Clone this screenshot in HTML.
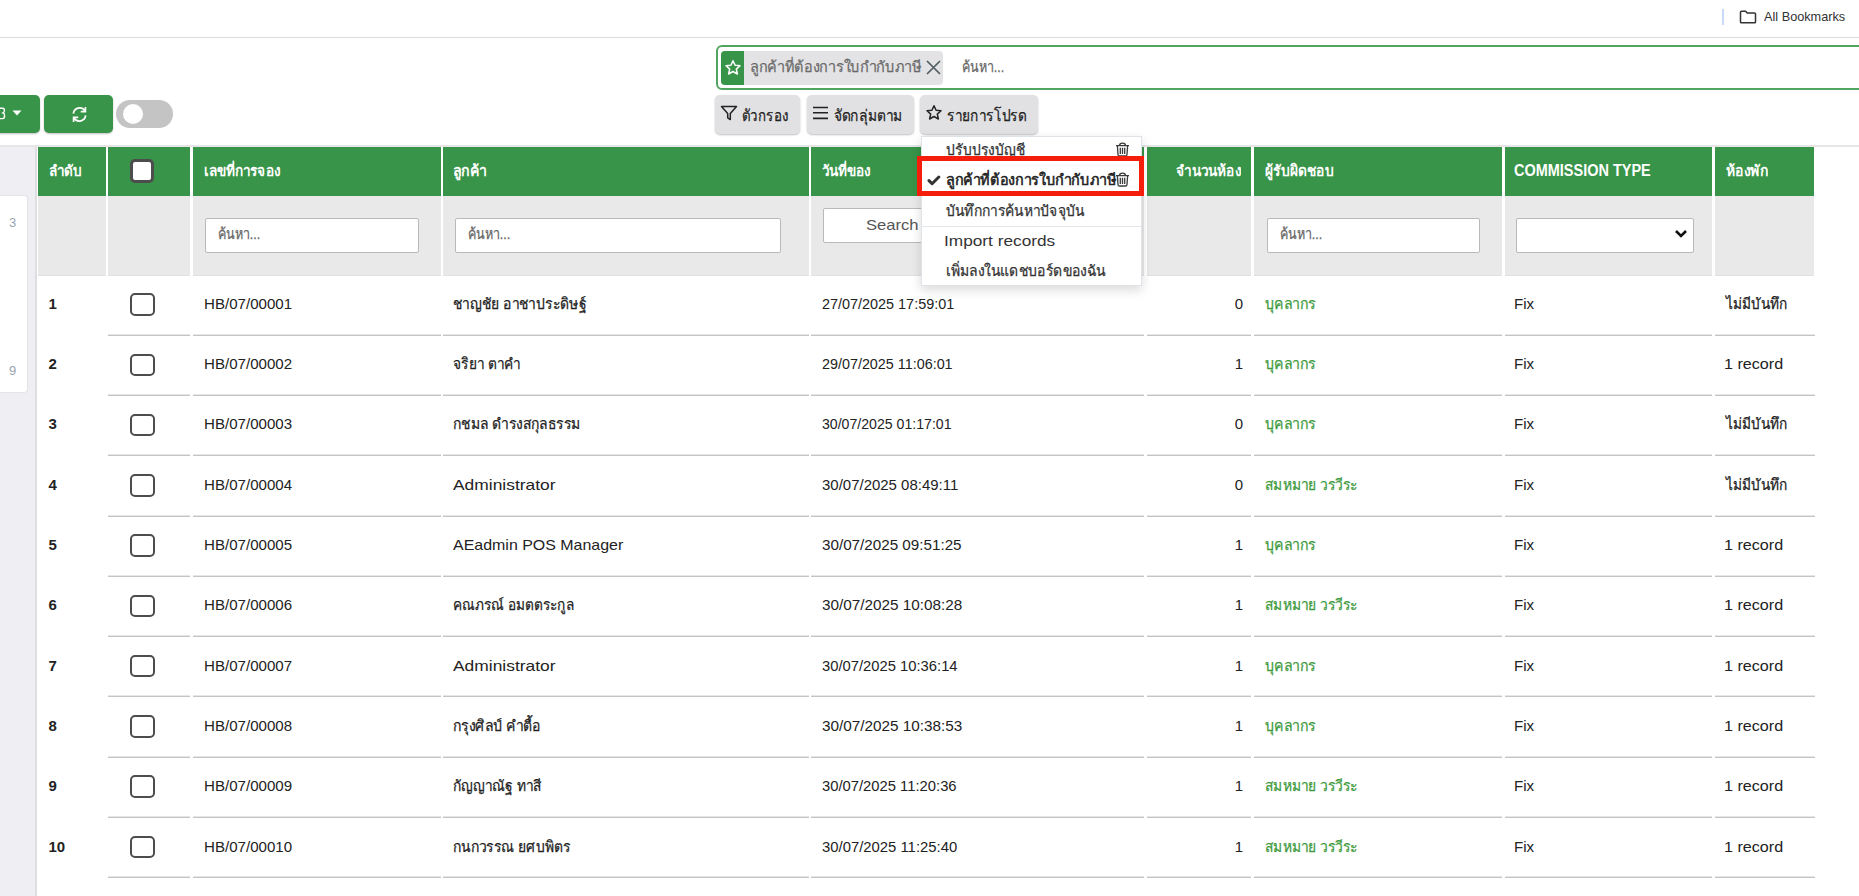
<!DOCTYPE html>
<html><head><meta charset="utf-8">
<style>
*{box-sizing:border-box;margin:0;padding:0}
html,body{width:1859px;height:896px;overflow:hidden;background:#fff;font-family:"Liberation Sans",sans-serif;color:#222}
.a{position:absolute}
.nw{white-space:nowrap;overflow:hidden}
#topline{left:0;top:37px;width:1859px;height:1px;background:#dadedb}
#hline{left:0;top:145px;width:1859px;height:2px;background:#e6e6e8}
#search{left:716px;top:45px;width:1200px;height:45px;border:2px solid #52a561;border-radius:6px}
#chip{left:721px;top:51px;width:222px;height:34px;background:#e3e3e5;border-radius:4px}
#chipicon{left:721px;top:51px;width:23px;height:34px;background:#389448;border-radius:4px 0 0 4px}
.gbtn{height:39px;top:95px;background:#e1e1e3;border-radius:5px;box-shadow:0 1px 2px rgba(0,0,0,.25);font-size:16px;color:#222;line-height:39px;white-space:nowrap;overflow:hidden}
.grn{background:#389448;border-radius:5px;box-shadow:0 1px 2px rgba(0,0,0,.25)}
#panel{left:0;top:147px;width:37px;height:749px;background:#efeff3;border-right:2px solid #dedee2}
#card{left:0;top:196px;width:27px;height:196px;background:#fff;border-radius:0 3px 3px 0;box-shadow:0 0 2px rgba(0,0,0,.15)}
#hdr{left:38px;top:147px;width:1776px;height:49px;background:#389448}
#flt{left:38px;top:196px;width:1776px;height:80px;background:#e9e9e9;border-bottom:1px solid #dde1e6}
.sep{top:147px;height:749px;background:#fff}
.hd{top:147px;height:49px;line-height:49px;color:#fff;font-weight:bold;font-size:15px;white-space:nowrap;overflow:hidden}
.inp{height:35px;background:#fff;border:1px solid #b9b9b9;border-radius:2px;font-size:15px;color:#666;line-height:33px;padding-left:12px;white-space:nowrap;overflow:hidden}
.rl{height:2px;border-top:1px solid #e6e6e6;background:#c4c4c4}
.t{white-space:nowrap;transform-origin:left center;-webkit-text-stroke:0.25px currentColor}
.chk{width:24.5px;height:22.5px;border:2.6px solid #4d4d4d;border-radius:5px;background:#fff}
.gt{color:#3a9a3a}
.dd{left:921px;top:136px;width:221px;height:150px;background:#fff;border:1px solid #dfe2e7;box-shadow:0 4px 10px rgba(0,0,0,.15)}
.di{font-size:15px;color:#333;white-space:nowrap;height:20px;line-height:20px;left:945px}

</style></head><body>
<div class="a" id="panel"></div><div class="a" id="card"></div><div class="a t" style="top:213.00px;font-size:13px;line-height:20px;left:9.00px;-webkit-text-stroke:0;color:#9aa5b1;">3</div><div class="a t" style="top:360.50px;font-size:13px;line-height:20px;left:9.00px;-webkit-text-stroke:0;color:#9aa5b1;">9</div><div class="a" id="hdr"></div><div class="a" id="flt"></div><div class="a rl" style="left:107.5px;top:333.75px;width:82.5px"></div><div class="a rl" style="left:192.5px;top:333.75px;width:248.5px"></div><div class="a rl" style="left:442.5px;top:333.75px;width:366.5px"></div><div class="a rl" style="left:810.5px;top:333.75px;width:333.5px"></div><div class="a rl" style="left:1146.5px;top:333.75px;width:104.5px"></div><div class="a rl" style="left:1253.5px;top:333.75px;width:248.5px"></div><div class="a rl" style="left:1504.5px;top:333.75px;width:207.5px"></div><div class="a rl" style="left:1714.5px;top:333.75px;width:100.5px"></div><div class="a rl" style="left:107.5px;top:394.00px;width:82.5px"></div><div class="a rl" style="left:192.5px;top:394.00px;width:248.5px"></div><div class="a rl" style="left:442.5px;top:394.00px;width:366.5px"></div><div class="a rl" style="left:810.5px;top:394.00px;width:333.5px"></div><div class="a rl" style="left:1146.5px;top:394.00px;width:104.5px"></div><div class="a rl" style="left:1253.5px;top:394.00px;width:248.5px"></div><div class="a rl" style="left:1504.5px;top:394.00px;width:207.5px"></div><div class="a rl" style="left:1714.5px;top:394.00px;width:100.5px"></div><div class="a rl" style="left:107.5px;top:454.25px;width:82.5px"></div><div class="a rl" style="left:192.5px;top:454.25px;width:248.5px"></div><div class="a rl" style="left:442.5px;top:454.25px;width:366.5px"></div><div class="a rl" style="left:810.5px;top:454.25px;width:333.5px"></div><div class="a rl" style="left:1146.5px;top:454.25px;width:104.5px"></div><div class="a rl" style="left:1253.5px;top:454.25px;width:248.5px"></div><div class="a rl" style="left:1504.5px;top:454.25px;width:207.5px"></div><div class="a rl" style="left:1714.5px;top:454.25px;width:100.5px"></div><div class="a rl" style="left:107.5px;top:514.50px;width:82.5px"></div><div class="a rl" style="left:192.5px;top:514.50px;width:248.5px"></div><div class="a rl" style="left:442.5px;top:514.50px;width:366.5px"></div><div class="a rl" style="left:810.5px;top:514.50px;width:333.5px"></div><div class="a rl" style="left:1146.5px;top:514.50px;width:104.5px"></div><div class="a rl" style="left:1253.5px;top:514.50px;width:248.5px"></div><div class="a rl" style="left:1504.5px;top:514.50px;width:207.5px"></div><div class="a rl" style="left:1714.5px;top:514.50px;width:100.5px"></div><div class="a rl" style="left:107.5px;top:574.75px;width:82.5px"></div><div class="a rl" style="left:192.5px;top:574.75px;width:248.5px"></div><div class="a rl" style="left:442.5px;top:574.75px;width:366.5px"></div><div class="a rl" style="left:810.5px;top:574.75px;width:333.5px"></div><div class="a rl" style="left:1146.5px;top:574.75px;width:104.5px"></div><div class="a rl" style="left:1253.5px;top:574.75px;width:248.5px"></div><div class="a rl" style="left:1504.5px;top:574.75px;width:207.5px"></div><div class="a rl" style="left:1714.5px;top:574.75px;width:100.5px"></div><div class="a rl" style="left:107.5px;top:635.00px;width:82.5px"></div><div class="a rl" style="left:192.5px;top:635.00px;width:248.5px"></div><div class="a rl" style="left:442.5px;top:635.00px;width:366.5px"></div><div class="a rl" style="left:810.5px;top:635.00px;width:333.5px"></div><div class="a rl" style="left:1146.5px;top:635.00px;width:104.5px"></div><div class="a rl" style="left:1253.5px;top:635.00px;width:248.5px"></div><div class="a rl" style="left:1504.5px;top:635.00px;width:207.5px"></div><div class="a rl" style="left:1714.5px;top:635.00px;width:100.5px"></div><div class="a rl" style="left:107.5px;top:695.25px;width:82.5px"></div><div class="a rl" style="left:192.5px;top:695.25px;width:248.5px"></div><div class="a rl" style="left:442.5px;top:695.25px;width:366.5px"></div><div class="a rl" style="left:810.5px;top:695.25px;width:333.5px"></div><div class="a rl" style="left:1146.5px;top:695.25px;width:104.5px"></div><div class="a rl" style="left:1253.5px;top:695.25px;width:248.5px"></div><div class="a rl" style="left:1504.5px;top:695.25px;width:207.5px"></div><div class="a rl" style="left:1714.5px;top:695.25px;width:100.5px"></div><div class="a rl" style="left:107.5px;top:755.50px;width:82.5px"></div><div class="a rl" style="left:192.5px;top:755.50px;width:248.5px"></div><div class="a rl" style="left:442.5px;top:755.50px;width:366.5px"></div><div class="a rl" style="left:810.5px;top:755.50px;width:333.5px"></div><div class="a rl" style="left:1146.5px;top:755.50px;width:104.5px"></div><div class="a rl" style="left:1253.5px;top:755.50px;width:248.5px"></div><div class="a rl" style="left:1504.5px;top:755.50px;width:207.5px"></div><div class="a rl" style="left:1714.5px;top:755.50px;width:100.5px"></div><div class="a rl" style="left:107.5px;top:815.75px;width:82.5px"></div><div class="a rl" style="left:192.5px;top:815.75px;width:248.5px"></div><div class="a rl" style="left:442.5px;top:815.75px;width:366.5px"></div><div class="a rl" style="left:810.5px;top:815.75px;width:333.5px"></div><div class="a rl" style="left:1146.5px;top:815.75px;width:104.5px"></div><div class="a rl" style="left:1253.5px;top:815.75px;width:248.5px"></div><div class="a rl" style="left:1504.5px;top:815.75px;width:207.5px"></div><div class="a rl" style="left:1714.5px;top:815.75px;width:100.5px"></div><div class="a rl" style="left:107.5px;top:876.00px;width:82.5px"></div><div class="a rl" style="left:192.5px;top:876.00px;width:248.5px"></div><div class="a rl" style="left:442.5px;top:876.00px;width:366.5px"></div><div class="a rl" style="left:810.5px;top:876.00px;width:333.5px"></div><div class="a rl" style="left:1146.5px;top:876.00px;width:104.5px"></div><div class="a rl" style="left:1253.5px;top:876.00px;width:248.5px"></div><div class="a rl" style="left:1504.5px;top:876.00px;width:207.5px"></div><div class="a rl" style="left:1714.5px;top:876.00px;width:100.5px"></div><div class="a rl" style="left:107.5px;top:936.25px;width:82.5px"></div><div class="a rl" style="left:192.5px;top:936.25px;width:248.5px"></div><div class="a rl" style="left:442.5px;top:936.25px;width:366.5px"></div><div class="a rl" style="left:810.5px;top:936.25px;width:333.5px"></div><div class="a rl" style="left:1146.5px;top:936.25px;width:104.5px"></div><div class="a rl" style="left:1253.5px;top:936.25px;width:248.5px"></div><div class="a rl" style="left:1504.5px;top:936.25px;width:207.5px"></div><div class="a rl" style="left:1714.5px;top:936.25px;width:100.5px"></div><div class="a sep" style="left:106px;width:2px"></div><div class="a sep" style="left:190px;width:3px"></div><div class="a sep" style="left:441px;width:2px"></div><div class="a sep" style="left:809px;width:2px"></div><div class="a sep" style="left:1144px;width:3px"></div><div class="a sep" style="left:1251px;width:3px"></div><div class="a sep" style="left:1502px;width:3px"></div><div class="a sep" style="left:1712px;width:3px"></div><div class="a t" style="top:160.50px;font-size:15px;line-height:20px;left:48.50px;font-weight:bold;-webkit-text-stroke:0;color:#fff;">ลำดับ</div><div class="a t" style="top:160.50px;font-size:15px;line-height:20px;left:204.00px;font-weight:bold;-webkit-text-stroke:0;color:#fff;">เลขที่การจอง</div><div class="a t" style="top:160.50px;font-size:15px;line-height:20px;left:453.00px;font-weight:bold;-webkit-text-stroke:0;color:#fff;">ลูกค้า</div><div class="a t" style="top:160.50px;font-size:15px;line-height:20px;left:822.00px;font-weight:bold;-webkit-text-stroke:0;color:#fff;">วันที่ของ</div><div class="a t" style="top:160.50px;font-size:15px;line-height:20px;right:618.00px;transform-origin:right center;font-weight:bold;-webkit-text-stroke:0;color:#fff;">จำนวนห้อง</div><div class="a t" style="top:160.50px;font-size:15px;line-height:20px;left:1265.00px;font-weight:bold;-webkit-text-stroke:0;color:#fff;">ผู้รับผิดชอบ</div><div class="a t" style="top:160.00px;font-size:16px;line-height:22px;left:1514.00px;font-weight:bold;-webkit-text-stroke:0;color:#fff;">COMMISSION TYPE</div><div class="a t" style="top:160.50px;font-size:15px;line-height:20px;left:1725.50px;font-weight:bold;-webkit-text-stroke:0;color:#fff;">ห้องพัก</div><div class="a chk" style="left:130px;top:159px;width:24px;height:24px;border-width:3px"></div><div class="a inp" style="left:205px;top:217.5px;width:214px"></div><div class="a inp" style="left:455px;top:217.5px;width:326px"></div><div class="a inp" style="left:823px;top:207.5px;width:307px"></div><div class="a inp" style="left:1267px;top:217.5px;width:213px"></div><div class="a inp" style="left:1516px;top:217.5px;width:178px"></div><div class="a t" style="top:224.00px;font-size:15px;line-height:20px;left:218.00px;color:#666;">ค้นหา...</div><div class="a t" style="top:224.00px;font-size:15px;line-height:20px;left:468.00px;color:#666;">ค้นหา...</div><div class="a t" style="top:214.50px;font-size:15px;line-height:20px;left:866.00px;-webkit-text-stroke:0;color:#555;">Search</div><div class="a t" style="top:224.00px;font-size:15px;line-height:20px;left:1280.00px;color:#666;">ค้นหา...</div><svg class="a" style="left:1674px;top:229px" width="14" height="10" viewBox="0 0 14 10"><path d="M2 2 L7 7 L12 2" fill="none" stroke="#111" stroke-width="2.6"/></svg><div class="a t" style="top:293.62px;font-size:15px;line-height:20px;left:48.50px;font-weight:bold;-webkit-text-stroke:0;">1</div><div class="a chk" style="left:130px;top:293.30px"></div><div class="a t" style="top:293.62px;font-size:15px;line-height:20px;left:204.00px;-webkit-text-stroke:0;">HB/07/00001</div><div class="a t" style="top:293.62px;font-size:15px;line-height:20px;left:453.00px;">ชาญชัย อาชาประดิษฐ์</div><div class="a t" style="top:293.62px;font-size:15px;line-height:20px;left:822.00px;-webkit-text-stroke:0;">27/07/2025 17:59:01</div><div class="a t" style="top:293.62px;font-size:15px;line-height:20px;right:616.00px;transform-origin:right center;-webkit-text-stroke:0;">0</div><div class="a t" style="top:293.62px;font-size:15px;line-height:20px;left:1265.00px;color:#3d9a3d;">บุคลากร</div><div class="a t" style="top:293.62px;font-size:15px;line-height:20px;left:1514.00px;-webkit-text-stroke:0;">Fix</div><div class="a t" style="top:293.62px;font-size:15px;line-height:20px;left:1725.50px;">ไม่มีบันทึก</div><div class="a t" style="top:353.95px;font-size:15px;line-height:20px;left:48.50px;font-weight:bold;-webkit-text-stroke:0;">2</div><div class="a chk" style="left:130px;top:353.55px"></div><div class="a t" style="top:353.95px;font-size:15px;line-height:20px;left:204.00px;-webkit-text-stroke:0;">HB/07/00002</div><div class="a t" style="top:353.95px;font-size:15px;line-height:20px;left:453.00px;">จริยา ตาคำ</div><div class="a t" style="top:353.95px;font-size:15px;line-height:20px;left:822.00px;-webkit-text-stroke:0;">29/07/2025 11:06:01</div><div class="a t" style="top:353.95px;font-size:15px;line-height:20px;right:616.00px;transform-origin:right center;-webkit-text-stroke:0;">1</div><div class="a t" style="top:353.95px;font-size:15px;line-height:20px;left:1265.00px;color:#3d9a3d;">บุคลากร</div><div class="a t" style="top:353.95px;font-size:15px;line-height:20px;left:1514.00px;-webkit-text-stroke:0;">Fix</div><div class="a t" style="top:353.95px;font-size:15px;line-height:20px;left:1724.00px;-webkit-text-stroke:0;">1 record</div><div class="a t" style="top:414.28px;font-size:15px;line-height:20px;left:48.50px;font-weight:bold;-webkit-text-stroke:0;">3</div><div class="a chk" style="left:130px;top:413.80px"></div><div class="a t" style="top:414.28px;font-size:15px;line-height:20px;left:204.00px;-webkit-text-stroke:0;">HB/07/00003</div><div class="a t" style="top:414.28px;font-size:15px;line-height:20px;left:453.00px;">กชมล ดำรงสกุลธรรม</div><div class="a t" style="top:414.28px;font-size:15px;line-height:20px;left:822.00px;-webkit-text-stroke:0;">30/07/2025 01:17:01</div><div class="a t" style="top:414.28px;font-size:15px;line-height:20px;right:616.00px;transform-origin:right center;-webkit-text-stroke:0;">0</div><div class="a t" style="top:414.28px;font-size:15px;line-height:20px;left:1265.00px;color:#3d9a3d;">บุคลากร</div><div class="a t" style="top:414.28px;font-size:15px;line-height:20px;left:1514.00px;-webkit-text-stroke:0;">Fix</div><div class="a t" style="top:414.28px;font-size:15px;line-height:20px;left:1725.50px;">ไม่มีบันทึก</div><div class="a t" style="top:474.62px;font-size:15px;line-height:20px;left:48.50px;font-weight:bold;-webkit-text-stroke:0;">4</div><div class="a chk" style="left:130px;top:474.05px"></div><div class="a t" style="top:474.62px;font-size:15px;line-height:20px;left:204.00px;-webkit-text-stroke:0;">HB/07/00004</div><div class="a t" style="top:474.62px;font-size:15px;line-height:20px;left:453.00px;-webkit-text-stroke:0;">Administrator</div><div class="a t" style="top:474.62px;font-size:15px;line-height:20px;left:822.00px;-webkit-text-stroke:0;">30/07/2025 08:49:11</div><div class="a t" style="top:474.62px;font-size:15px;line-height:20px;right:616.00px;transform-origin:right center;-webkit-text-stroke:0;">0</div><div class="a t" style="top:474.62px;font-size:15px;line-height:20px;left:1265.00px;color:#3d9a3d;">สมหมาย วรวีระ</div><div class="a t" style="top:474.62px;font-size:15px;line-height:20px;left:1514.00px;-webkit-text-stroke:0;">Fix</div><div class="a t" style="top:474.62px;font-size:15px;line-height:20px;left:1725.50px;">ไม่มีบันทึก</div><div class="a t" style="top:534.94px;font-size:15px;line-height:20px;left:48.50px;font-weight:bold;-webkit-text-stroke:0;">5</div><div class="a chk" style="left:130px;top:534.30px"></div><div class="a t" style="top:534.94px;font-size:15px;line-height:20px;left:204.00px;-webkit-text-stroke:0;">HB/07/00005</div><div class="a t" style="top:534.94px;font-size:15px;line-height:20px;left:453.00px;-webkit-text-stroke:0;">AEadmin POS Manager</div><div class="a t" style="top:534.94px;font-size:15px;line-height:20px;left:822.00px;-webkit-text-stroke:0;">30/07/2025 09:51:25</div><div class="a t" style="top:534.94px;font-size:15px;line-height:20px;right:616.00px;transform-origin:right center;-webkit-text-stroke:0;">1</div><div class="a t" style="top:534.94px;font-size:15px;line-height:20px;left:1265.00px;color:#3d9a3d;">บุคลากร</div><div class="a t" style="top:534.94px;font-size:15px;line-height:20px;left:1514.00px;-webkit-text-stroke:0;">Fix</div><div class="a t" style="top:534.94px;font-size:15px;line-height:20px;left:1724.00px;-webkit-text-stroke:0;">1 record</div><div class="a t" style="top:595.27px;font-size:15px;line-height:20px;left:48.50px;font-weight:bold;-webkit-text-stroke:0;">6</div><div class="a chk" style="left:130px;top:594.55px"></div><div class="a t" style="top:595.27px;font-size:15px;line-height:20px;left:204.00px;-webkit-text-stroke:0;">HB/07/00006</div><div class="a t" style="top:595.27px;font-size:15px;line-height:20px;left:453.00px;">คณภรณ์ อมตตระกูล</div><div class="a t" style="top:595.27px;font-size:15px;line-height:20px;left:822.00px;-webkit-text-stroke:0;">30/07/2025 10:08:28</div><div class="a t" style="top:595.27px;font-size:15px;line-height:20px;right:616.00px;transform-origin:right center;-webkit-text-stroke:0;">1</div><div class="a t" style="top:595.27px;font-size:15px;line-height:20px;left:1265.00px;color:#3d9a3d;">สมหมาย วรวีระ</div><div class="a t" style="top:595.27px;font-size:15px;line-height:20px;left:1514.00px;-webkit-text-stroke:0;">Fix</div><div class="a t" style="top:595.27px;font-size:15px;line-height:20px;left:1724.00px;-webkit-text-stroke:0;">1 record</div><div class="a t" style="top:655.61px;font-size:15px;line-height:20px;left:48.50px;font-weight:bold;-webkit-text-stroke:0;">7</div><div class="a chk" style="left:130px;top:654.80px"></div><div class="a t" style="top:655.61px;font-size:15px;line-height:20px;left:204.00px;-webkit-text-stroke:0;">HB/07/00007</div><div class="a t" style="top:655.61px;font-size:15px;line-height:20px;left:453.00px;-webkit-text-stroke:0;">Administrator</div><div class="a t" style="top:655.61px;font-size:15px;line-height:20px;left:822.00px;-webkit-text-stroke:0;">30/07/2025 10:36:14</div><div class="a t" style="top:655.61px;font-size:15px;line-height:20px;right:616.00px;transform-origin:right center;-webkit-text-stroke:0;">1</div><div class="a t" style="top:655.61px;font-size:15px;line-height:20px;left:1265.00px;color:#3d9a3d;">บุคลากร</div><div class="a t" style="top:655.61px;font-size:15px;line-height:20px;left:1514.00px;-webkit-text-stroke:0;">Fix</div><div class="a t" style="top:655.61px;font-size:15px;line-height:20px;left:1724.00px;-webkit-text-stroke:0;">1 record</div><div class="a t" style="top:715.93px;font-size:15px;line-height:20px;left:48.50px;font-weight:bold;-webkit-text-stroke:0;">8</div><div class="a chk" style="left:130px;top:715.05px"></div><div class="a t" style="top:715.93px;font-size:15px;line-height:20px;left:204.00px;-webkit-text-stroke:0;">HB/07/00008</div><div class="a t" style="top:715.93px;font-size:15px;line-height:20px;left:453.00px;">กรุงศิลป์ คำตื้อ</div><div class="a t" style="top:715.93px;font-size:15px;line-height:20px;left:822.00px;-webkit-text-stroke:0;">30/07/2025 10:38:53</div><div class="a t" style="top:715.93px;font-size:15px;line-height:20px;right:616.00px;transform-origin:right center;-webkit-text-stroke:0;">1</div><div class="a t" style="top:715.93px;font-size:15px;line-height:20px;left:1265.00px;color:#3d9a3d;">บุคลากร</div><div class="a t" style="top:715.93px;font-size:15px;line-height:20px;left:1514.00px;-webkit-text-stroke:0;">Fix</div><div class="a t" style="top:715.93px;font-size:15px;line-height:20px;left:1724.00px;-webkit-text-stroke:0;">1 record</div><div class="a t" style="top:776.26px;font-size:15px;line-height:20px;left:48.50px;font-weight:bold;-webkit-text-stroke:0;">9</div><div class="a chk" style="left:130px;top:775.30px"></div><div class="a t" style="top:776.26px;font-size:15px;line-height:20px;left:204.00px;-webkit-text-stroke:0;">HB/07/00009</div><div class="a t" style="top:776.26px;font-size:15px;line-height:20px;left:453.00px;">กัญญาณัฐ ทาสี</div><div class="a t" style="top:776.26px;font-size:15px;line-height:20px;left:822.00px;-webkit-text-stroke:0;">30/07/2025 11:20:36</div><div class="a t" style="top:776.26px;font-size:15px;line-height:20px;right:616.00px;transform-origin:right center;-webkit-text-stroke:0;">1</div><div class="a t" style="top:776.26px;font-size:15px;line-height:20px;left:1265.00px;color:#3d9a3d;">สมหมาย วรวีระ</div><div class="a t" style="top:776.26px;font-size:15px;line-height:20px;left:1514.00px;-webkit-text-stroke:0;">Fix</div><div class="a t" style="top:776.26px;font-size:15px;line-height:20px;left:1724.00px;-webkit-text-stroke:0;">1 record</div><div class="a t" style="top:836.60px;font-size:15px;line-height:20px;left:48.50px;font-weight:bold;-webkit-text-stroke:0;">10</div><div class="a chk" style="left:130px;top:835.55px"></div><div class="a t" style="top:836.60px;font-size:15px;line-height:20px;left:204.00px;-webkit-text-stroke:0;">HB/07/00010</div><div class="a t" style="top:836.60px;font-size:15px;line-height:20px;left:453.00px;">กนกวรรณ ยศบพิตร</div><div class="a t" style="top:836.60px;font-size:15px;line-height:20px;left:822.00px;-webkit-text-stroke:0;">30/07/2025 11:25:40</div><div class="a t" style="top:836.60px;font-size:15px;line-height:20px;right:616.00px;transform-origin:right center;-webkit-text-stroke:0;">1</div><div class="a t" style="top:836.60px;font-size:15px;line-height:20px;left:1265.00px;color:#3d9a3d;">สมหมาย วรวีระ</div><div class="a t" style="top:836.60px;font-size:15px;line-height:20px;left:1514.00px;-webkit-text-stroke:0;">Fix</div><div class="a t" style="top:836.60px;font-size:15px;line-height:20px;left:1724.00px;-webkit-text-stroke:0;">1 record</div><div class="a chk" style="left:130px;top:895.50px"></div><div class="a" id="topline"></div><div class="a" id="hline"></div><div class="a" style="left:1722px;top:9px;width:2px;height:16px;background:#c7daf6"></div><svg class="a" style="left:1739px;top:10px" width="18" height="14" viewBox="0 0 18 14"><path d="M1.5 2.2 Q1.5 1.2 2.5 1.2 H6.6 L8.2 3 H15.5 Q16.5 3 16.5 4 V12 Q16.5 12.8 15.5 12.8 H2.5 Q1.5 12.8 1.5 12 Z" fill="none" stroke="#333" stroke-width="1.5"/></svg><div class="a t" style="top:8.00px;font-size:13px;line-height:17px;left:1764.00px;-webkit-text-stroke:0;color:#333;">All Bookmarks</div><div class="a" id="search"></div><div class="a" id="chip"></div><div class="a" id="chipicon"></div><svg class="a" style="left:724px;top:59px" width="18" height="18" viewBox="0 0 18 18"><path d="M9 1.8 L11.1 6.3 L16 6.8 L12.3 10.1 L13.4 15 L9 12.5 L4.6 15 L5.7 10.1 L2 6.8 L6.9 6.3 Z" fill="none" stroke="#fff" stroke-width="1.5" stroke-linejoin="round"/></svg><div class="a t" style="top:57.00px;font-size:15px;line-height:20px;left:750.00px;color:#6a6a6a;">ลูกค้าที่ต้องการใบกำกับภาษี</div><svg class="a" style="left:925px;top:59px" width="17" height="17" viewBox="0 0 17 17"><path d="M2 2 L15 15 M15 2 L2 15" stroke="#525c63" stroke-width="1.7"/></svg><div class="a t" style="top:57.00px;font-size:15px;line-height:20px;left:962.00px;color:#666;">ค้นหา...</div><div class="a grn" style="left:-6px;top:95px;width:46px;height:38px"></div><svg class="a" style="left:12px;top:110px" width="10" height="6" viewBox="0 0 10 6"><path d="M0.5 0.5 H9.5 L5 5.5 Z" fill="#fff"/></svg><svg class="a" style="left:0;top:107px" width="8" height="14" viewBox="0 0 8 14"><path d="M0 1.3 H2.6 Q4.4 1.3 4.4 3.4 Q4.4 5.2 2.9 5.9 Q4.6 6.6 4.6 8.8 Q4.6 11.6 2.6 11.6 H0" fill="none" stroke="#fff" stroke-width="1.4"/></svg><div class="a grn" style="left:44px;top:95px;width:69px;height:38px"></div><svg class="a" style="left:69.5px;top:104.5px" width="19" height="19" viewBox="0 0 18 18"><path d="M3.2 8.2 A5.9 5.9 0 0 1 14 5.5 M14.8 9.8 A5.9 5.9 0 0 1 4 12.5" fill="none" stroke="#fff" stroke-width="1.6"/><path d="M14.6 1.8 V6.2 H10.2" fill="none" stroke="#fff" stroke-width="1.6"/><path d="M3.4 16.2 V11.8 H7.8" fill="none" stroke="#fff" stroke-width="1.6"/></svg><div class="a" style="left:116px;top:99.5px;width:57px;height:28.5px;border-radius:15px;background:#c4c4c4"></div><div class="a" style="left:122.5px;top:103.8px;width:20px;height:20px;border-radius:50%;background:#fff"></div><div class="a gbtn" style="left:715px;width:85px"></div><svg class="a" style="left:720px;top:105px" width="18" height="16" viewBox="0 0 18 16"><path d="M1.5 1.5 H16.5 L10.3 8.5 V14.5 L7.7 12.8 V8.5 Z" fill="none" stroke="#222" stroke-width="1.5" stroke-linejoin="round"/></svg><div class="a t" style="top:105.50px;font-size:16px;line-height:20px;left:742.00px;">ตัวกรอง</div><div class="a gbtn" style="left:807px;width:107px"></div><svg class="a" style="left:812px;top:105px" width="17" height="15" viewBox="0 0 17 15"><path d="M1 2.5 H16 M1 7.7 H16 M1 13.4 H16" stroke="#222" stroke-width="1.6"/></svg><div class="a t" style="top:105.50px;font-size:16px;line-height:20px;left:834.00px;">จัดกลุ่มตาม</div><div class="a gbtn" style="left:920px;width:118px"></div><svg class="a" style="left:925px;top:104px" width="18" height="18" viewBox="0 0 18 18"><path d="M9 1.8 L11.1 6.3 L16 6.8 L12.3 10.1 L13.4 15 L9 12.5 L4.6 15 L5.7 10.1 L2 6.8 L6.9 6.3 Z" fill="none" stroke="#222" stroke-width="1.5" stroke-linejoin="round"/></svg><div class="a t" style="top:105.50px;font-size:16px;line-height:20px;left:947.00px;">รายการโปรด</div><div class="a dd"></div><div class="a t" style="top:140.00px;font-size:15px;line-height:20px;left:945.50px;color:#333;">ปรับปรุงบัญชี</div><svg class="a" style="left:1115px;top:141.5px" width="15" height="15" viewBox="0 0 15 15"><path d="M1 3.6 H14 M4.6 3.4 Q4.6 1.2 7.5 1.2 Q10.4 1.2 10.4 3.4 M2.4 3.8 L3 12.6 Q3.2 14 4.6 14 H10.4 Q11.8 14 12 12.6 L12.6 3.8 M5.3 5.8 V12 M7.5 5.8 V12 M9.7 5.8 V12" fill="none" stroke="#3a3a3a" stroke-width="1.3"/></svg><div class="a" style="left:917px;top:156px;width:227px;height:40px;border:5px solid #f51d0c;background:#fff"></div><svg class="a" style="left:927px;top:174.5px" width="14" height="11" viewBox="0 0 14 11"><path d="M2 5.6 L5.1 8.7 L11.8 2" fill="none" stroke="#333" stroke-width="3" stroke-linecap="round" stroke-linejoin="round"/></svg><div class="a t" style="top:170.00px;font-size:15px;line-height:20px;left:945.50px;color:#222;-webkit-text-stroke:0.55px #222;">ลูกค้าที่ต้องการใบกำกับภาษี</div><svg class="a" style="left:1115px;top:172px" width="15" height="15" viewBox="0 0 15 15"><path d="M1 3.6 H14 M4.6 3.4 Q4.6 1.2 7.5 1.2 Q10.4 1.2 10.4 3.4 M2.4 3.8 L3 12.6 Q3.2 14 4.6 14 H10.4 Q11.8 14 12 12.6 L12.6 3.8 M5.3 5.8 V12 M7.5 5.8 V12 M9.7 5.8 V12" fill="none" stroke="#3a3a3a" stroke-width="1.3"/></svg><div class="a t" style="top:201.00px;font-size:15px;line-height:20px;left:945.50px;color:#333;">บันทึกการค้นหาปัจจุบัน</div><div class="a" style="left:922px;top:226px;width:219px;height:1px;background:#e3e6ea"></div><div class="a t" style="top:231.00px;font-size:15px;line-height:20px;left:944.00px;-webkit-text-stroke:0;color:#333;">Import records</div><div class="a t" style="top:261.00px;font-size:15px;line-height:20px;left:945.50px;color:#333;">เพิ่มลงในแดชบอร์ดของฉัน</div>
<script>var W=[-1,-1,33.3,76.0,34.0,48.8,64.7,68.9,136.7,42.0,42.3,42.3,52.6,42.3,-1,88.1,133.0,132.2,-1,50.9,20.1,61.0,-1,88.1,67.8,130.6,-1,50.9,20.1,59.2,-1,88.1,127.2,129.5,-1,50.9,20.1,61.0,-1,88.1,102.5,136.3,-1,92.3,20.1,61.0,-1,88.1,170.3,139.6,-1,50.9,20.1,59.2,-1,88.1,120.8,140.3,-1,92.3,20.1,59.2,-1,88.1,102.5,135.6,-1,50.9,20.1,59.2,-1,88.1,87.9,140.3,-1,50.9,20.1,59.2,-1,88.1,88.3,134.6,-1,92.3,20.1,59.2,-1,88.1,117.7,135.2,-1,92.3,20.1,59.2,81.2,171.7,42.2,46.6,68.8,79.4,79.1,170.5,138.5,111.2,159.5];var E=document.querySelectorAll('.t');for(var i=0;i<E.length;i++){if(W[i]>0){var s=W[i]/E[i].getBoundingClientRect().width;E[i].style.transform='scaleX('+s.toFixed(4)+')';}}</script>
</body></html>
